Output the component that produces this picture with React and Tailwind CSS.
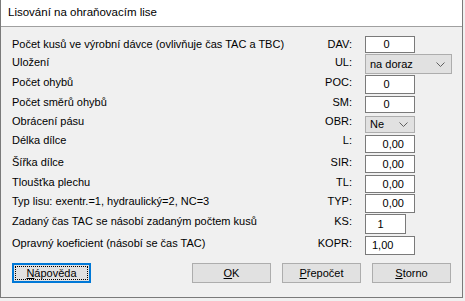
import React from "react";

const rows = [
  { label: "Počet kusů ve výrobní dávce (ovlivňuje čas TAC a TBC)", code: "DAV:", h: "h-[18px]", lead: "leading-[16px]", box: "w-[50px] h-[17px] justify-center pr-[7px]", value: "0" },
  { label: "Uložení", code: "UL:", h: "h-[21px]", lead: "leading-[16px]", select: "w-[87px] h-[20px]", value: "na doraz" },
  { label: "Počet ohybů", code: "POC:", h: "h-[21px]", lead: "leading-[14px]", box: "w-[50px] h-[19px] justify-center pr-[7px]", value: "0" },
  { label: "Počet směrů ohybů", code: "SM:", h: "h-[20px]", lead: "leading-[12px]", box: "w-[50px] h-[17px] justify-center pr-[7px]", value: "0" },
  { label: "Obrácení pásu", code: "OBR:", h: "h-[19px]", lead: "leading-[10px]", select: "w-[50px] h-[17px]", value: "Ne" },
  { label: "Délka dílce", code: "L:", h: "h-[20px]", lead: "leading-[10px]", box: "w-[50px] h-[18px] justify-end pr-[10px]", value: "0,00" },
  { label: "Šířka dílce", code: "SIR:", h: "h-[20px]", lead: "leading-[14px]", box: "w-[50px] h-[18px] justify-end pr-[10px]", value: "0,00" },
  { label: "Tloušťka plechu", code: "TL:", h: "h-[19px]", lead: "leading-[14px]", box: "w-[50px] h-[18px] justify-end pr-[10px]", value: "0,00" },
  { label: "Typ lisu: exentr.=1, hydraulický=2,  NC=3", code: "TYP:", h: "h-[20px]", lead: "leading-[14px]", box: "w-[50px] h-[19px] justify-end pr-[10px]", value: "0,00" },
  { label: "Zadaný čas TAC se násobí zadaným počtem kusů", code: "KS:", h: "h-[22px]", lead: "leading-[14px]", box: "w-[41px] h-[20px] justify-center pr-[10px]", value: "1" },
  { label: "Opravný koeficient (násobí se čas TAC)", code: "KOPR:", h: "h-[19px]", lead: "leading-[14px]", box: "w-[50px] h-[19px] justify-start pl-[6px]", value: "1,00" },
];

function Chevron() {
  return (
    <svg width="9" height="5" viewBox="0 0 9 5" className="shrink-0">
      <polyline points="0.5,0.5 4.5,4.5 8.5,0.5" fill="none" stroke="#606060" strokeWidth="1" />
    </svg>
  );
}

function Button({ first, rest, focused }) {
  return (
    <button
      className={
        focused
          ? "w-[79px] h-[20px] border-2 border-[#0078d7] bg-[#e1e1e1] p-[1px]"
          : "w-[79px] h-[20px] border border-[#adadad] bg-[#e1e1e1]"
      }
    >
      <span
        className={
          focused
            ? "flex h-full w-full items-center justify-center border border-dotted border-black text-[11px] leading-none"
            : "flex h-full w-full items-center justify-center text-[11px] leading-none"
        }
      >
        <span className="underline underline-offset-[1px]">{first}</span>
        {rest}
      </span>
    </button>
  );
}

export default function App() {
  return (
    <div
      className="h-[301px] w-[465px] bg-[#f0f0f0] text-black"
      style={{ fontFamily: '"Liberation Sans", Arial, sans-serif' }}
    >
      <div className="w-[463px] border-x border-b border-[#7a7a7a]">
        <div className="flex h-[27px] items-center border-b border-[#a0a0a0] bg-white pl-[7px] text-[11.5px]">
          Lisování na ohraňovacím lise
        </div>
        <div className="bg-[#f0f0f0] pt-[9px] pb-[14px]">
          {rows.map((r) => (
            <div key={r.code} className={`flex ${r.h} text-[11px]`}>
              <div className={`flex w-[340px] ml-[11px] justify-between ${r.lead}`}>
                <span className="whitespace-nowrap">{r.label}</span>
                <span className="whitespace-nowrap">{r.code}</span>
              </div>
              <div className="ml-[13px]">
                {r.select ? (
                  <div className={`flex ${r.select} items-center justify-between border border-[#adadad] bg-[#e1e1e1] pl-[4px] pr-[6px]`}>
                    <span>{r.value}</span>
                    <Chevron />
                  </div>
                ) : (
                  <div className={`flex ${r.box} items-center border border-[#7a7a7a] bg-white`}>
                    {r.value}
                  </div>
                )}
              </div>
            </div>
          ))}
          <div className="mt-[8px] flex justify-between px-[11px]">
            <Button first="N" rest="ápověda" focused />
            <div className="flex gap-[11px]">
              <Button first="O" rest="K" />
              <Button first="P" rest="řepočet" />
              <Button first="S" rest="torno" />
            </div>
          </div>
        </div>
      </div>
    </div>
  );
}
